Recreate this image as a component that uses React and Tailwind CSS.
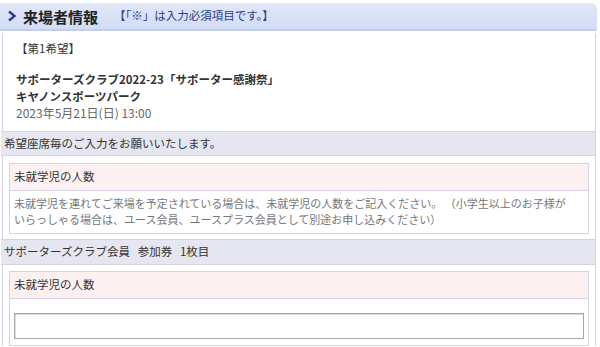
import React from 'react';

const font = { fontFamily: '"Noto Sans CJK JP", "Noto Sans", sans-serif' };

const InfoBox = ({ title, children }) => (
  <div className="mx-[6px] border border-[#d6d2e2] bg-white">
    <div className="h-[27px] flex items-center px-[4px] bg-[#fdf0f0] border-b border-[#d6d2e2] text-[11.5px] text-[#333]">
      {title}
    </div>
    {children}
  </div>
);

const App = () => {
  return (
    <div className="w-[600px] h-[347px] overflow-hidden bg-white pt-[3px]" style={font}>
      <div className="w-[597px]">
        <div className="h-[28px] flex items-center bg-gradient-to-b from-[#e0e8f8] to-[#d2dcf4] border-b-2 border-[#c4cdec] rounded-tr-[6px]">
          <svg width="10" height="12" viewBox="0 0 10 12" className="ml-[7px] mr-[6px]">
            <path d="M2 1.5 L7.5 6 L2 10.5" fill="none" stroke="#2b3f8c" strokeWidth="2.4" />
          </svg>
          <span className="text-[15px] font-bold text-[#222] leading-none">来場者情報</span>
          <span className="ml-[16px] text-[11.5px] text-[#2d3d8a] leading-none">【「※」は入力必須項目です。】</span>
        </div>
        <div className="mt-[2px] border-l border-r border-[#d4d0e6] ml-[2px] w-[594px]">
          <div className="px-[13px] pt-[6px] pb-[10px] text-[#333]">
            <div className="text-[11.5px] leading-[18px]">【第1希望】</div>
            <div className="mt-[14px] font-bold text-[11.5px] leading-[17px]">
              <div>サポーターズクラブ2022-23「サポーター感謝祭」</div>
              <div>キヤノンスポーツパーク</div>
            </div>
            <div className="text-[12px] text-[#666] leading-[16px]">2023年5月21日(日) 13:00</div>
          </div>
          <div className="h-[25px] flex items-center px-[3px] bg-[#e6e6f0] border-t border-b border-[#d4d4e0] text-[11.5px] text-[#333] -ml-[2px]">
            希望座席毎のご入力をお願いいたします。
          </div>
          <div className="pt-[7px] pb-[5px]">
            <InfoBox title="未就学児の人数">
              <div className="px-[4px] pt-[4px] pb-[6px] text-[11px] leading-[16px] text-[#777]">
                未就学児を連れてご来場を予定されている場合は、未就学児の人数をご記入ください。 （小学生以上のお子様が
                <br />
                いらっしゃる場合は、ユース会員、ユースプラス会員として別途お申し込みください）
              </div>
            </InfoBox>
          </div>
          <div className="h-[26px] flex items-center px-[3px] bg-[#e6e6f0] border-t border-b border-[#d4d4e0] text-[11.5px] text-[#333] -ml-[2px]">
            サポーターズクラブ会員&nbsp;&nbsp;&nbsp;参加券&nbsp;&nbsp;&nbsp;1枚目
          </div>
          <div className="pt-[6px]">
            <InfoBox title="未就学児の人数">
              <div className="px-[4px] pt-[14px] pb-[6px]">
                <input
                  type="text"
                  className="block w-full h-[26px] border border-[#a8a8a8] shadow-[inset_1px_1px_1px_rgba(0,0,0,0.15)] bg-white outline-none"
                />
              </div>
            </InfoBox>
          </div>
        </div>
      </div>
    </div>
  );
};

export default App;
